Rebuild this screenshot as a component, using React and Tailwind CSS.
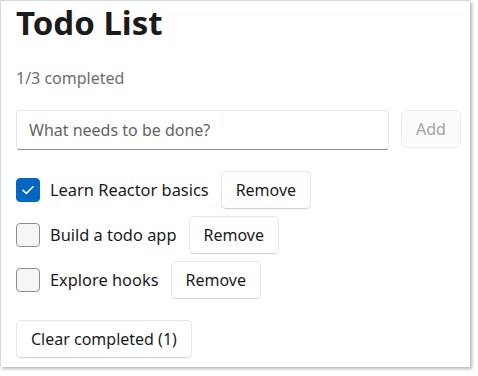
import { useState } from 'react'

const initial = [
  { id: 1, text: 'Learn Reactor basics', done: true },
  { id: 2, text: 'Build a todo app', done: false },
  { id: 3, text: 'Explore hooks', done: false },
]

const btn = 'h-[38px] px-[14px] rounded-[5px] bg-white border border-[#e6e6e6] border-b-[#d4d4d4] text-[16px] text-[#1b1b1b] shadow-[0_1px_1px_rgba(0,0,0,0.03)]'

function Check({ checked, onChange }) {
  return (
    <button onClick={onChange}
      className={`w-[24px] h-[24px] rounded-[4px] shrink-0 flex items-center justify-center ${checked ? 'bg-[#0067c0] border border-[#0067c0]' : 'bg-[#f6f6f6] border border-[#8d8d8d]'}`}>
      {checked && (
        <svg width="16" height="16" viewBox="0 0 16 16" fill="none">
          <path d="M3 8.3 L6.4 11.4 L13 4.8" stroke="white" strokeWidth="1.6" strokeLinecap="round" strokeLinejoin="round" />
        </svg>
      )}
    </button>
  )
}

export default function App() {
  const [todos, setTodos] = useState(initial)
  const [text, setText] = useState('')
  const doneCount = todos.filter(t => t.done).length

  const add = () => {
    if (!text.trim()) return
    setTodos(p => [...p, { id: Date.now(), text: text.trim(), done: false }])
    setText('')
  }

  return (
    <div className="w-[478px] h-[376px] bg-white" style={{ fontFamily: '"Noto Sans", "Open Sans", sans-serif' }}>
      <div className="w-[470px] h-[367px] bg-white border-l border-t border-[#d3d7df] shadow-[2px_2px_3px_rgba(0,0,0,0.28)] pl-[15px]">
        <h1 className="text-[33px] leading-[44px] font-bold text-[#1b1b1b]">Todo List</h1>
        <p className="mt-[23px] text-[16px] leading-[20px] text-[#6e6e6e]">{doneCount}/{todos.length} completed</p>

        <div className="mt-[22px] flex gap-[12px]">
          <input value={text} onChange={e => setText(e.target.value)} placeholder="What needs to be done?"
            className="w-[373px] h-[40px] px-[12px] rounded-[4px] border border-[#e5e5e5] border-b-[#8a8a8a] bg-white text-[16px] text-[#1b1b1b] placeholder:text-[#646464] outline-none" />
          <button onClick={add} disabled={!text.trim()}
            className="w-[60px] h-[38px] rounded-[5px] border border-[#ececec] bg-[#fbfbfb] text-[16px] text-[#a3a3a3]">Add</button>
        </div>

        <div className="mt-[21px] flex flex-col gap-[7px]">
          {todos.map(t => (
            <div key={t.id} className="flex items-center h-[38px]">
              <Check checked={t.done} onChange={() => setTodos(p => p.map(x => x.id === t.id ? { ...x, done: !x.done } : x))} />
              <span className="ml-[10px] text-[16.4px] text-[#1b1b1b]">{t.text}</span>
              <button onClick={() => setTodos(p => p.filter(x => x.id !== t.id))} className={`${btn} ml-[12px]`}>Remove</button>
            </div>
          ))}
        </div>

        <button onClick={() => setTodos(p => p.filter(x => !x.done))} className={`${btn} mt-[21px]`}>Clear completed ({doneCount})</button>
      </div>
    </div>
  )
}
